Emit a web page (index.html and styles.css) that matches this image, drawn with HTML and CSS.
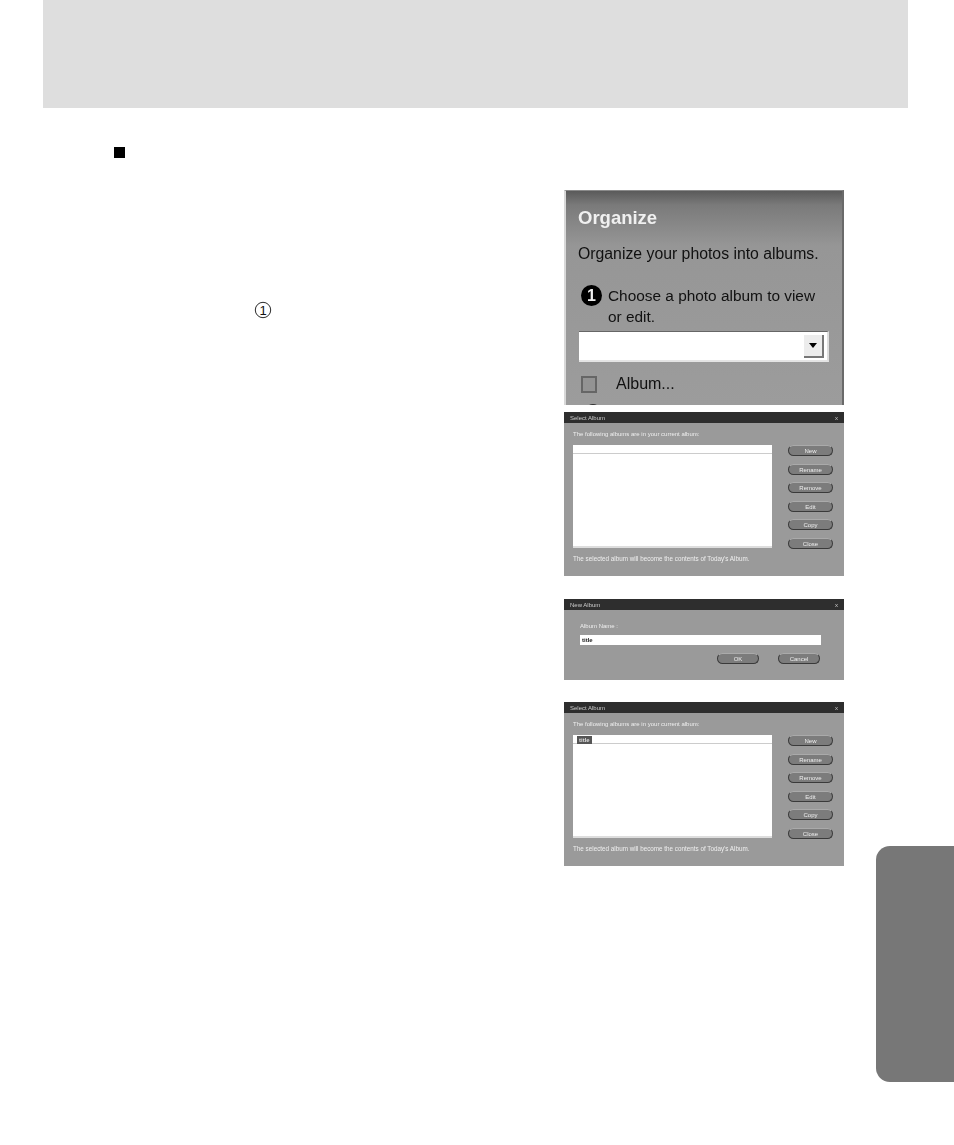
FILE: index.html
```html
<!DOCTYPE html>
<html lang="en">
<head>
<meta charset="utf-8">
<title>Organize albums</title>
<link rel="stylesheet" href="styles.css">
</head>
<body>
<header class="band"></header>
<main class="content">
  <section class="notes">
    <div class="bullet"></div>
    <div class="circled">
      <svg width="18" height="18" viewBox="0 0 18 18" aria-hidden="true">
        <circle cx="9" cy="9" r="7.7" fill="none" stroke="#111" stroke-width="0.9"/>
        <text x="9" y="13.6" text-anchor="middle" class="circled-num">1</text>
      </svg>
    </div>
  </section>
  <section class="shots">
    <div class="organize">
      <div class="org-title">Organize</div>
      <div class="org-lead">Organize your photos into albums.</div>
      <div class="org-step">
        <span class="org-badge">1</span>
        <span class="org-step-text">Choose a photo album to view<br>or edit.</span>
      </div>
      <div class="org-select"><span class="org-arrow"></span></div>
      <div class="org-album"><span class="org-check"></span><span>Album...</span></div>
      <span class="org-peek"></span>
    </div>

    <div class="dialog album-dialog">
      <div class="titlebar"><span>Select Album</span><span>x</span></div>
      <div class="dialog-label">The following albums are in your current album:</div>
      <div class="album-body">
        <div class="album-list"><div class="album-row"></div></div>
        <div class="album-buttons">
          <span class="pill">New</span><span class="pill">Rename</span><span class="pill">Remove</span>
          <span class="pill">Edit</span><span class="pill">Copy</span><span class="pill">Close</span>
        </div>
      </div>
      <div class="dialog-foot">The selected album will become the contents of Today's Album.</div>
    </div>

    <div class="dialog new-dialog">
      <div class="titlebar"><span>New Album</span><span>x</span></div>
      <div class="dialog-label new-label">Album Name :</div>
      <div class="new-input">title</div>
      <div class="new-actions"><span class="pill wide">OK</span><span class="pill wide">Cancel</span></div>
    </div>

    <div class="dialog album-dialog">
      <div class="titlebar"><span>Select Album</span><span>x</span></div>
      <div class="dialog-label">The following albums are in your current album:</div>
      <div class="album-body">
        <div class="album-list"><div class="album-row"><b class="album-item">title</b></div></div>
        <div class="album-buttons">
          <span class="pill">New</span><span class="pill">Rename</span><span class="pill">Remove</span>
          <span class="pill">Edit</span><span class="pill">Copy</span><span class="pill">Close</span>
        </div>
      </div>
      <div class="dialog-foot">The selected album will become the contents of Today's Album.</div>
    </div>
  </section>
</main>
<aside class="tab"></aside>
</body>
</html>
```
FILE: styles.css
```css
* { box-sizing: border-box; }
html, body { margin: 0; height: 1145px; overflow: hidden; background: #fff; }
body { position: relative; font-family: "Liberation Sans", Arial, sans-serif; }

.band { height: 108px; margin: 0 46px 0 43px; background: #dedede; }

.content { display: flex; padding: 39px 110px 0 114px; }
.notes { width: 450px; flex: none; }
.bullet { width: 11px; height: 11px; background: #000; }
.circled { margin: 143px 0 0 140px; width: 18px; height: 18px; }
.circled svg { display: block; }
.circled-num { font: 13px "Liberation Sans", Arial, sans-serif; fill: #111; }

.shots { width: 280px; flex: none; padding-top: 43px; display: flex; flex-direction: column; }

/* Organize panel */
.organize {
  position: relative; height: 215px; overflow: hidden;
  padding: 16px 13px 0 12px;
  background: linear-gradient(#5a5a5a 0, #7a7a7a 14px, #969696 55px, #9c9c9c 100%);
  border-left: 2px solid #d8d8d8; border-right: 2px solid #6a6a6a; border-top: 1px solid #8a8a8a;
  filter: blur(0.7px);
}
.org-title { font-size: 18.5px; font-weight: 700; line-height: 22px; color: #f0f0f0; }
.org-lead { margin-top: 15px; font-size: 15.8px; line-height: 20px; color: #111; white-space: nowrap; }
.org-step { display: flex; gap: 6px; margin: 21px 0 0 3px; }
.org-badge {
  width: 21px; height: 21px; flex: none; border-radius: 50%; margin-top: 0;
  background: #000; color: #eee; font-size: 16px; font-weight: 700; line-height: 21px; text-align: center;
}
.org-step-text { font-size: 15.4px; line-height: 21px; color: #111; white-space: nowrap; }
.org-select {
  display: flex; justify-content: flex-end; align-items: center;
  width: 250px; height: 31px; margin: 4px 0 0 1px; padding-right: 3px;
  background: #fff; border-top: 1px solid #666; border-right: 2px solid #ddd; border-bottom: 2px solid #e4e4e4;
}
.org-arrow {
  display: flex; align-items: center; justify-content: center;
  width: 20px; height: 23px; background: #ececec; border-right: 2px solid #777; border-bottom: 2px solid #777;
}
.org-arrow::before {
  content: ""; border-left: 4px solid transparent; border-right: 4px solid transparent; border-top: 5px solid #000;
}
.org-album { display: flex; align-items: center; gap: 19px; margin: 13px 0 0 3px; font-size: 16px; color: #111; }
.org-check { width: 16px; height: 17px; background: #939393; border: 2px solid #666; }
.org-peek {
  position: absolute; left: 19px; top: 213px; width: 16px; height: 16px;
  border-radius: 50%; border: 2px solid #333;
}

/* Dialogs */
.dialog {
  display: flex; flex-direction: column; background: #9a9a9a; color: #efefef;
  font-size: 6px; white-space: nowrap; overflow: hidden; filter: blur(0.6px);
}
.album-dialog { height: 164px; margin-top: 7px; }
.new-dialog { height: 81px; margin-top: 23px; }
.new-dialog + .album-dialog { margin-top: 22px; }
.titlebar {
  display: flex; justify-content: space-between; align-items: center; flex: none;
  height: 11px; padding: 0 6px; background: #2e2e2e; color: #ccc;
}
.dialog-label { margin: 6px 0 0 9px; height: 10px; line-height: 10px; }
.album-body { display: flex; margin: 6px 11px 0 9px; gap: 16px; }
.album-list { width: 199px; height: 103px; background: #fff; border-bottom: 2px solid #ddd; }
.album-row { height: 9px; padding: 1px 0 0 4px; border-bottom: 1px solid #ccc; line-height: 8px; }
.album-item { display: inline-block; padding: 0 2px; background: #555; color: #ddd; }
.album-buttons { display: flex; flex-direction: column; width: 45px; gap: 7.6px; }
.pill {
  display: block; height: 11px; line-height: 10px; text-align: center; border-radius: 6px;
  background: #7c7c7c; border: 1px solid #3a3a3a; border-top-color: #aaa; color: #eee;
}
.dialog-foot { margin: 6px 0 0 9px; line-height: 8px; font-size: 6.3px; }
.new-label { margin: 11px 0 0 16px; }
.new-input {
  height: 10px; line-height: 10px; margin: 4px 23px 0 16px; padding-left: 2px;
  background: #fff; color: #222; font-weight: 700;
}
.new-actions { display: flex; justify-content: flex-end; gap: 19px; margin: 8px 24px 0 0; }
.pill.wide { width: 42px; }

.tab {
  position: absolute; left: 876px; top: 846px; width: 78px; height: 236px;
  background: #777; border-radius: 14px 0 0 14px;
}
```
